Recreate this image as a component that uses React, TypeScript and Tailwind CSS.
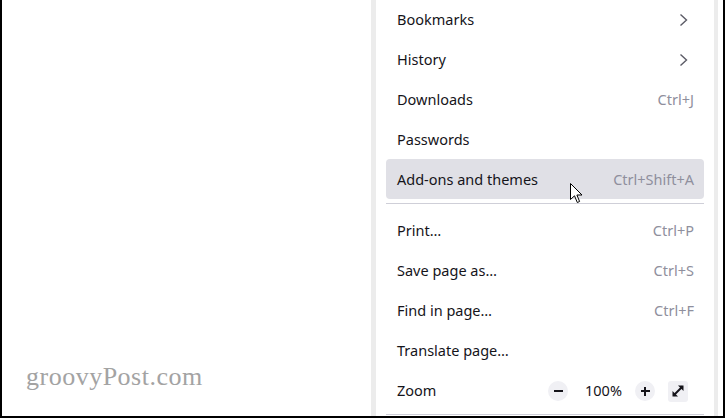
import React from "react";

const font = { fontFamily: '"Segoe UI", "Noto Sans", sans-serif' };

function Chevron() {
  return (
    <svg width="9" height="14" viewBox="0 0 9 14" className="mr-[6px]">
      <polyline points="1.5,1.5 7.5,7 1.5,12.5" fill="none" stroke="#5b5b66" strokeWidth="1.4" />
    </svg>
  );
}

function Item({ label, shortcut, arrow, active }: { label: string; shortcut?: string; arrow?: boolean; active?: boolean }) {
  return (
    <div
      className={`mx-[10px] flex h-[40px] items-center justify-between rounded-[4px] pl-[11px] pr-[10px] pt-[2px] text-[14.5px] text-[#15141a] ${
        active ? "bg-[#e0e0e6]" : ""
      }`}
    >
      <span>{label}</span>
      {shortcut && <span className="text-[#8f8f9d]">{shortcut}</span>}
      {arrow && <Chevron />}
    </div>
  );
}

function Separator() {
  return <div className="mx-[10px] h-px bg-[#cfcfd8]" />;
}

export default function App() {
  return (
    <div className="flex h-[418px] w-[725px] overflow-hidden border-x-2 border-b-2 border-black bg-white" style={font}>
      <div className="flex w-[369px] flex-col justify-end pb-[26px] pl-[24px]">
        <span
          className="text-[26px] leading-none tracking-[0.5px] text-[#a3a3a3]"
          style={{ fontFamily: '"Liberation Serif", serif' }}
        >
          groovyPost.com
        </span>
      </div>
      <div className="w-[5px] bg-[#ececec]" />
      <div className="relative flex w-[338px] flex-col">
        <div className="-mt-px">
          <Item label="Bookmarks" arrow />
          <Item label="History" arrow />
          <Item label="Downloads" shortcut="Ctrl+J" />
          <Item label="Passwords" />
          <Item label="Add-ons and themes" shortcut="Ctrl+Shift+A" active />
          <div className="pb-[6px] pt-[4px]">
            <Separator />
          </div>
          <Item label="Print…" shortcut="Ctrl+P" />
          <Item label="Save page as…" shortcut="Ctrl+S" />
          <Item label="Find in page…" shortcut="Ctrl+F" />
          <Item label="Translate page…" />
          <div className="mx-[10px] flex h-[40px] items-center pl-[11px] pt-[2px] text-[14.5px] text-[#15141a]">
            <span className="flex-1">Zoom</span>
            <div className="flex h-[20px] w-[20px] items-center justify-center rounded-full bg-[#f0f0f4]">
              <div className="h-[2px] w-[9px] bg-[#15141a]" />
            </div>
            <span className="ml-[17px] mr-[14px] w-[36px]">100%</span>
            <div className="relative flex h-[20px] w-[20px] items-center justify-center rounded-full bg-[#f0f0f4]">
              <div className="h-[2px] w-[9px] bg-[#15141a]" />
              <div className="absolute h-[9px] w-[2px] bg-[#15141a]" />
            </div>
            <div className="ml-[13px] mr-[16px] flex h-[21px] w-[20px] items-center justify-center rounded-[3px] bg-[#f0f0f4]">
              <svg width="14" height="14" viewBox="0 0 14 14">
                <path d="M2.5 11.5 L11.5 2.5" stroke="#15141a" strokeWidth="2" />
                <path d="M7 1.5 H12.5 V7 Z" fill="#15141a" />
                <path d="M1.5 7 V12.5 H7 Z" fill="#15141a" />
              </svg>
            </div>
          </div>
          <div className="pt-[4px]">
            <Separator />
          </div>
        </div>
        <svg className="absolute left-[194px] top-[183px]" width="13" height="21" viewBox="0 0 13 21">
          <path
            d="M0.5 0.5 V16.5 L4.5 12.8 L7.3 19.5 L9.6 18.5 L6.9 12 H12 Z"
            fill="#fff"
            stroke="#000"
            strokeWidth="1"
            strokeLinejoin="round"
          />
        </svg>
      </div>
      <div className="w-[4px] bg-[#ececec]" />
    </div>
  );
}
